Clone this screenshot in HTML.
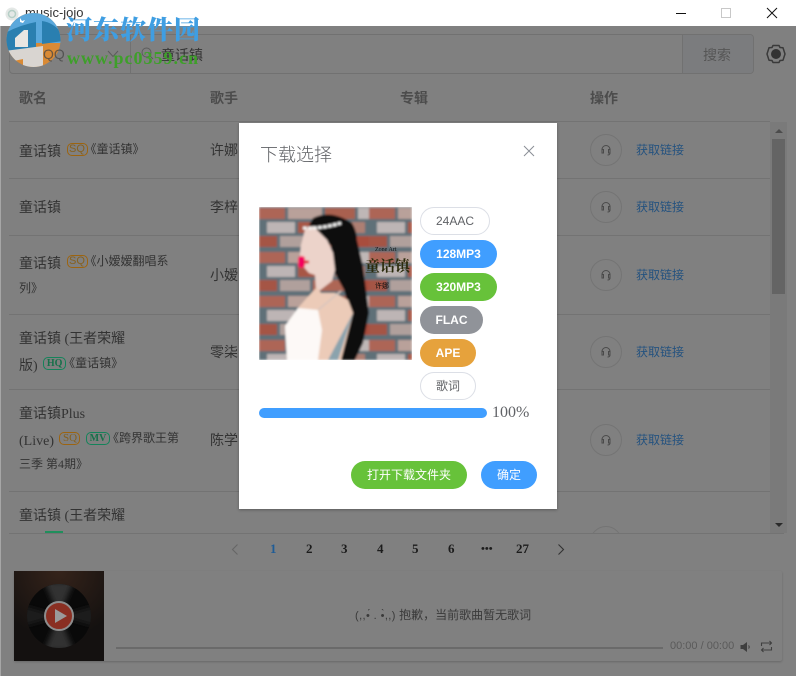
<!DOCTYPE html>
<html lang="zh"><head><meta charset="utf-8"><title>music-jojo</title>
<style>
*{box-sizing:border-box}
html,body{margin:0;padding:0;width:796px;height:676px;overflow:hidden;background:#808080}
body{position:relative;font-family:"Liberation Serif","Noto Sans CJK SC",serif;color:#333}
.a{position:absolute;white-space:nowrap}
.cn{font-family:"Liberation Sans","Noto Sans CJK SC",sans-serif}
.line{position:absolute;height:1px;background:#737373;left:9px;width:761px}
.t{font-size:14px;line-height:20px;color:#333;font-family:"Liberation Serif","Noto Sans CJK SC",serif}
.s{font-size:12px;color:#333;position:relative;top:-3px;margin-left:-3px}
.s2{font-size:12px;color:#333}
.tag{display:inline-block;width:21px;height:13px;line-height:11px;border:1px solid;border-radius:5px;font-size:11px;text-align:center;margin:0 0 0 2px;vertical-align:4px;padding:0;overflow:visible}
.sq{color:#86601f;border-color:#9c6410}
.hq{color:#17704a;border-color:#14835a;width:23px;font-weight:bold;font-size:10px}
.circle{position:absolute;left:590px;width:32px;height:32px;border:1px solid #747474;border-radius:50%}
.link{position:absolute;left:636px;font-size:12px;color:#24527f;font-family:"Liberation Sans","Noto Sans CJK SC",sans-serif;white-space:nowrap;line-height:16px}
.pg{position:absolute;top:541px;font-size:13px;font-weight:bold;color:#1c1c1c;line-height:16px}
.pill{position:absolute;left:420px;height:28px;border-radius:14px;font:bold 12px/28px "Liberation Sans","Noto Sans CJK SC",sans-serif;color:#fff;text-align:center}
.ghost{background:#fff;border:1px solid #dcdfe6;color:#606266;font-weight:normal;line-height:26px}
</style></head><body>

<!-- title bar -->
<div class="a" style="left:0;top:0;width:796px;height:26px;background:#fff"></div>
<svg class="a" style="left:5px;top:7px" width="14" height="14" viewBox="0 0 14 14"><circle cx="7" cy="7" r="6.5" fill="#e4e8e6"/><circle cx="7" cy="7" r="3.5" fill="none" stroke="#b5cfc6" stroke-width="1.5"/></svg>
<div class="a" style="left:25px;top:4px;font:13px/18px 'Liberation Sans',sans-serif;color:#333">music-jojo</div>
<div class="a" style="left:676px;top:13px;width:10px;height:1px;background:#111"></div>
<div class="a" style="left:721px;top:8px;width:10px;height:10px;border:1px solid #c8c8c8"></div>
<svg class="a" style="left:766px;top:7px" width="12" height="12" viewBox="0 0 12 12"><path d="M1 1L11 11M11 1L1 11" stroke="#111" stroke-width="1" fill="none"/></svg>

<!-- search -->
<div class="a" style="left:9px;top:34px;width:745px;height:40px;border:1px solid #717171;border-radius:4px;background:#808080"></div>
<div class="a" style="left:130px;top:34px;width:1px;height:40px;background:#717171"></div>
<div class="a" style="left:682px;top:35px;width:71px;height:38px;background:#7b7c7e;border-left:1px solid #717171;border-radius:0 3px 3px 0"></div>
<svg class="a" style="left:107px;top:50px" width="12" height="8" viewBox="0 0 12 8"><path d="M1 1L6 6.5L11 1" stroke="#5c5c5c" fill="none"/></svg>
<svg class="a" style="left:141px;top:47px" width="13" height="13" viewBox="0 0 13 13"><circle cx="5.5" cy="5.5" r="4.5" stroke="#5c5c5c" fill="none"/><path d="M9 9L12 12" stroke="#5c5c5c"/></svg>
<div class="a cn" style="left:161px;top:45px;font-size:14px;line-height:20px;color:#333">童话镇</div>
<div class="a cn" style="left:703px;top:45px;font-size:14px;line-height:20px;color:#565656">搜索</div>
<svg class="a" style="left:766px;top:44px" width="20" height="20" viewBox="0 0 20 20"><path d="M7 1.500H13L14 3.500L17 3.800L19 10L17 16.200L14 16.500L13 18.500H7L6 16.500L3 16.200L1 10L3 3.800L6 3.500Z" fill="none" stroke="#3a3a3a" stroke-width="1.500" stroke-linejoin="round"/><circle cx="10" cy="10" r="5" fill="#333"/></svg>

<!-- header -->
<div class="a cn" style="left:19px;top:88px;font-size:14px;font-weight:bold;line-height:20px;color:#4c4c4c">歌名</div>
<div class="a cn" style="left:210px;top:88px;font-size:14px;font-weight:bold;line-height:20px;color:#4c4c4c">歌手</div>
<div class="a cn" style="left:400px;top:88px;font-size:14px;font-weight:bold;line-height:20px;color:#4c4c4c">专辑</div>
<div class="a cn" style="left:590px;top:88px;font-size:14px;font-weight:bold;line-height:20px;color:#4c4c4c">操作</div>

<!-- row lines -->
<div class="line" style="top:121px"></div>
<div class="line" style="top:178px"></div>
<div class="line" style="top:235px"></div>
<div class="line" style="top:314px"></div>
<div class="line" style="top:389px"></div>
<div class="line" style="top:491px"></div>
<div class="line" style="top:533px;width:775px"></div>

<!-- rows left -->
<div class="a t" style="left:19px;top:142px">童话镇 <span class="tag sq" style="font-family:'Liberation Sans'">SQ</span><span class="s">《童话镇》</span></div>
<div class="a t" style="left:19px;top:199px">童话镇</div>
<div class="a t" style="left:19px;top:254px">童话镇 <span class="tag sq" style="font-family:'Liberation Sans'">SQ</span><span class="s">《小嫒嫒翻唱系</span></div>
<div class="a t s2" style="left:19px;top:278px;font-size:12px">列》</div>
<div class="a t" style="left:19px;top:330px">童话镇 (王者荣耀</div>
<div class="a t" style="left:19px;top:356px">版) <span class="tag hq">HQ</span><span class="s">《童话镇》</span></div>
<div class="a t" style="left:19px;top:405px">童话镇Plus</div>
<div class="a t" style="left:19px;top:431px">(Live) <span class="tag sq">SQ</span> <span class="tag hq" style="width:24px">MV</span><span class="s">《跨界歌王第</span></div>
<div class="a t s2" style="left:19px;top:454px;font-size:12px">三季 第4期》</div>
<div class="a t" style="left:19px;top:507px">童话镇 (王者荣耀</div>
<div class="a" style="left:45px;top:531px;width:18px;height:2px;background:#1f8f5c"></div>

<!-- singers -->
<div class="a t" style="left:210px;top:142px">许娜</div>
<div class="a t" style="left:210px;top:199px">李梓</div>
<div class="a t" style="left:210px;top:267px">小嫒</div>
<div class="a t" style="left:210px;top:344px">零柒</div>
<div class="a t" style="left:210px;top:432px">陈学</div>

<!-- actions -->
<div class="circle" style="top:134px"></div>
<div class="circle" style="top:191px"></div>
<div class="circle" style="top:259px"></div>
<div class="circle" style="top:336px"></div>
<div class="circle" style="top:424px"></div>
<div class="a" style="left:590px;top:526px;width:32px;height:7px;overflow:hidden"><div style="width:32px;height:32px;border:1px solid #747474;border-radius:50%"></div></div>
<svg class="a" style="left:600px;top:144px" width="12" height="12" viewBox="0 0 12 12"><path d="M2 7V5.500A4 4 0 0 1 10 5.500V7M2 5.500H3.500V9H2ZM8.500 5.500H10V9H8.500ZM10 9Q10 11 7.500 11" fill="none" stroke="#4a4a4a" stroke-width="1"/></svg>
<svg class="a" style="left:600px;top:201px" width="12" height="12" viewBox="0 0 12 12"><path d="M2 7V5.500A4 4 0 0 1 10 5.500V7M2 5.500H3.500V9H2ZM8.500 5.500H10V9H8.500ZM10 9Q10 11 7.500 11" fill="none" stroke="#4a4a4a"/></svg>
<svg class="a" style="left:600px;top:269px" width="12" height="12" viewBox="0 0 12 12"><path d="M2 7V5.500A4 4 0 0 1 10 5.500V7M2 5.500H3.500V9H2ZM8.500 5.500H10V9H8.500ZM10 9Q10 11 7.500 11" fill="none" stroke="#4a4a4a"/></svg>
<svg class="a" style="left:600px;top:346px" width="12" height="12" viewBox="0 0 12 12"><path d="M2 7V5.500A4 4 0 0 1 10 5.500V7M2 5.500H3.500V9H2ZM8.500 5.500H10V9H8.500ZM10 9Q10 11 7.500 11" fill="none" stroke="#4a4a4a"/></svg>
<svg class="a" style="left:600px;top:434px" width="12" height="12" viewBox="0 0 12 12"><path d="M2 7V5.500A4 4 0 0 1 10 5.500V7M2 5.500H3.500V9H2ZM8.500 5.500H10V9H8.500ZM10 9Q10 11 7.500 11" fill="none" stroke="#4a4a4a"/></svg>
<div class="link" style="top:142px">获取链接</div>
<div class="link" style="top:199px">获取链接</div>
<div class="link" style="top:267px">获取链接</div>
<div class="link" style="top:344px">获取链接</div>
<div class="link" style="top:432px">获取链接</div>

<!-- scrollbar -->
<div class="a" style="left:770px;top:122px;width:17px;height:411px;background:#7a7a7a"></div>
<div class="a" style="left:772px;top:139px;width:13px;height:155px;background:#646464"></div>
<div class="a" style="left:775px;top:129px;border:4px solid transparent;border-top:0;border-bottom:4px solid #4c4c4c"></div>
<div class="a" style="left:775px;top:523px;border:4px solid transparent;border-bottom:0;border-top:4px solid #2a2a2a"></div>

<!-- pagination -->
<svg class="a" style="left:230px;top:543px" width="10" height="13" viewBox="0 0 10 13"><path d="M7.500 1.500L2.500 6.500L7.500 11.500" fill="none" stroke="#666" stroke-width="1.100"/></svg>
<div class="pg" style="left:270px;color:#1f5c96">1</div>
<div class="pg" style="left:306px">2</div>
<div class="pg" style="left:341px">3</div>
<div class="pg" style="left:377px">4</div>
<div class="pg" style="left:412px">5</div>
<div class="pg" style="left:448px">6</div>
<div class="pg" style="left:481px;font-size:11px">•••</div>
<div class="pg" style="left:516px">27</div>
<svg class="a" style="left:556px;top:543px" width="10" height="13" viewBox="0 0 10 13"><path d="M2.500 1.500L7.500 6.500L2.500 11.500" fill="none" stroke="#333" stroke-width="1.100"/></svg>

<!-- player -->
<div class="a" style="left:14px;top:571px;width:768px;height:90px;background:#808080;box-shadow:0 1px 2px rgba(0,0,0,.2);border-radius:2px"></div>
<svg class="a" style="left:14px;top:571px" width="90" height="90" viewBox="0 0 90 90">
<defs><radialGradient id="glow" cx=".5" cy="0" r=".75"><stop offset="0" stop-color="#35231a"/><stop offset="1" stop-color="#141110"/></radialGradient>
<filter id="vb"><feGaussianBlur stdDeviation="3"/></filter>
<clipPath id="vc"><circle cx="45" cy="45" r="32"/></clipPath></defs>
<rect width="90" height="90" fill="url(#glow)"/>
<circle cx="45" cy="45" r="32" fill="#090909"/>
<g clip-path="url(#vc)"><path d="M45 45L30 10H60ZM45 45L30 80H60Z" fill="#333" filter="url(#vb)"/><path d="M45 45L10 35V55ZM45 45L80 35V55Z" fill="#1c1c1c" filter="url(#vb)"/></g>
<circle cx="45" cy="45" r="14" fill="#8a2f22" stroke="#8d8d8d" stroke-width="2"/>
<path d="M41 38L53 45L41 52Z" fill="#9a9a9a"/>
</svg>
<div class="a cn" style="left:355px;top:606px;font-size:12px;line-height:18px;color:#3a3a3a"><span style="font-family:'Liberation Sans',sans-serif;font-size:11px;letter-spacing:.4px">(,,•́ . •̀,,)</span> 抱歉，当前歌曲暂无歌词</div>
<div class="a" style="left:116px;top:647px;width:547px;height:2px;background:#6a6a6a"></div>
<div class="a" style="left:670px;top:638px;font:11px/16px 'Liberation Sans',sans-serif;color:#5a5a5a">00:00 / 00:00</div>
<svg class="a" style="left:740px;top:641px" width="11" height="12" viewBox="0 0 11 12"><path d="M0.500 4H3L7 1V11L3 8H0.500Z" fill="#3f3f3f"/><path d="M8.500 4.500Q10 6 8.500 7.500" stroke="#3f3f3f" fill="none"/></svg>
<svg class="a" style="left:760px;top:640px" width="13" height="13" viewBox="0 0 13 13"><path d="M1.500 6V3H11.500M9.500 1L11.500 3L9.500 5M11.500 7V10H1.500M3.500 8L1.500 10L3.500 12" stroke="#3f3f3f" fill="none" stroke-width="1.100"/></svg>

<!-- watermark -->
<svg class="a" style="left:5px;top:13px" width="58" height="55" viewBox="0 0 58 55">
<defs><clipPath id="lc"><circle cx="28.500" cy="27" r="27"/></clipPath></defs>
<g clip-path="url(#lc)">
<rect width="58" height="55" fill="#d98a35"/>
<rect width="58" height="30" fill="#5aa8dc"/>
<path d="M0 20Q15 12 31 9V34L0 39Z" fill="#2a7fb0"/>
<path d="M37 8Q50 10 58 22V28L37 31Z" fill="#2a7fb0"/>
<path d="M0 38L38 33V55H18V46L4 49Z" fill="#d9d5d1"/>
<path d="M10 34V25L19 17H23V34Z" fill="#e9e6e2"/>
<path d="M15 5L17 8L20 7L18 10L15 9Z" fill="#fff"/>
</g>
</svg>
<div class="a cn" style="left:43px;top:44px;font-size:14px;line-height:20px;color:#444;opacity:.75">QQ</div>
<div class="a" style="left:66px;top:13px;font:900 26px/32px 'Noto Serif CJK SC','Liberation Serif',serif;color:#3f9ee2;letter-spacing:1px">河东软件园</div>
<div class="a" style="left:67px;top:46px;font:bold 18px/24px 'Liberation Serif',serif;color:#3e9f2a;letter-spacing:1px">www.pc0359.cn</div>

<!-- dialog -->
<div class="a" style="left:239px;top:123px;width:318px;height:386px;background:#fff;box-shadow:0 1px 3px rgba(0,0,0,.3)"></div>
<div class="a cn" style="left:260px;top:143px;font-size:18px;line-height:24px;color:#606266;font-weight:300">下载选择</div>
<svg class="a" style="left:523px;top:145px" width="12" height="12" viewBox="0 0 12 12"><path d="M1 1L11 11M11 1L1 11" stroke="#8a8f96" fill="none"/></svg>

<svg class="a" style="left:259px;top:207px" width="153" height="153" viewBox="0 0 153 153">
<defs>
<filter id="b" x="-5%" y="-5%" width="110%" height="110%"><feGaussianBlur stdDeviation="1"/></filter>
<filter id="b2"><feGaussianBlur stdDeviation="0.350"/></filter>
<pattern id="br" width="110" height="44" patternUnits="userSpaceOnUse">
<rect width="110" height="44" fill="#5f7078"/>
<rect x="-4" y="1" width="30" height="11" fill="#ad6556"/><rect x="29" y="1" width="34" height="11" fill="#b9a19a"/><rect x="66" y="1" width="30" height="11" fill="#a9604f"/><rect x="99" y="1" width="14" height="11" fill="#bfb7b6"/>
<rect x="8" y="15" width="28" height="11" fill="#bdb5b5"/><rect x="39" y="15" width="34" height="11" fill="#a85645"/><rect x="76" y="15" width="30" height="11" fill="#ad7f73"/>
<rect x="-8" y="29" width="26" height="11" fill="#a55445"/><rect x="21" y="29" width="30" height="11" fill="#b0a09c"/><rect x="54" y="29" width="34" height="11" fill="#ae6655"/><rect x="91" y="29" width="24" height="11" fill="#a84d3d"/>
</pattern>
</defs>
<g filter="url(#b)">
<rect width="153" height="153" fill="url(#br)"/>
<path d="M54 11Q72 2 93 16Q98 24 98 33L104 59L110 106L104 136L96 153H78L92 109L85 83L74 63L72 39L50 18Z" fill="#0d0c10"/>
<path d="M46 23L54 19L68 33L74 46L76 63L73 74L60 84L57 83L56 68L50 66L43 58L41 48L42 38Z" fill="#ecd3ca"/>
<path d="M58 80L46 93L39 101L26 119L28 153H82L94 106L89 93L76 86L62 86Z" fill="#eccbb8"/>
<path d="M39 101L59 103L63 123L59 153H28L26 119Z" fill="#fdf9f7"/>
<path d="M94 106L69 153H79Z" fill="#8ba3ad"/>
<path d="M59 103L82 84" stroke="#d9c6bd" stroke-width="1.500"/>
<path d="M44 21Q62 22 82 16" stroke="#f3f3f2" stroke-width="3" fill="none" stroke-dasharray="4 1"/>
<rect x="39" y="49" width="7" height="12" rx="3" fill="#f4005f"/>
<path d="M45 55H50" stroke="#d91d2a" stroke-width="3"/>
</g>
<g filter="url(#b2)">
<text x="106" y="64" font-size="15" font-weight="bold" fill="#2a2a08" font-family="Noto Serif CJK SC,serif">童话镇</text>
<text x="116" y="81" font-size="7" fill="#111" font-family="Noto Sans CJK SC,sans-serif">许娜</text>
<text x="116" y="44" font-size="6" fill="#111" font-family="Liberation Serif,serif">Zone Art</text>
</g>
</svg>

<div class="pill ghost" style="top:207px;width:70px">24AAC</div>
<div class="pill" style="top:240px;width:77px;background:#409eff">128MP3</div>
<div class="pill" style="top:273px;width:77px;background:#67c23a">320MP3</div>
<div class="pill" style="top:306px;width:63px;background:#909399">FLAC</div>
<div class="pill" style="top:339px;width:56px;background:#e6a23c">APE</div>
<div class="pill ghost" style="top:372px;width:56px">歌词</div>

<div class="a" style="left:259px;top:408px;width:228px;height:10px;border-radius:5px;background:#409eff"></div>
<div class="a" style="left:492px;top:404px;font:16px/18px 'Liberation Serif',serif;color:#606266">100%</div>

<div class="a cn" style="left:351px;top:461px;width:116px;height:28px;border-radius:14px;background:#67c23a;color:#fff;font-size:12px;line-height:28px;text-align:center">打开下载文件夹</div>
<div class="a cn" style="left:481px;top:461px;width:56px;height:28px;border-radius:14px;background:#409eff;color:#fff;font-size:12px;line-height:28px;text-align:center">确定</div>

<!-- window edge -->
<div class="a" style="left:0;top:26px;width:1px;height:650px;background:#a6a6a6"></div>
</body></html>
